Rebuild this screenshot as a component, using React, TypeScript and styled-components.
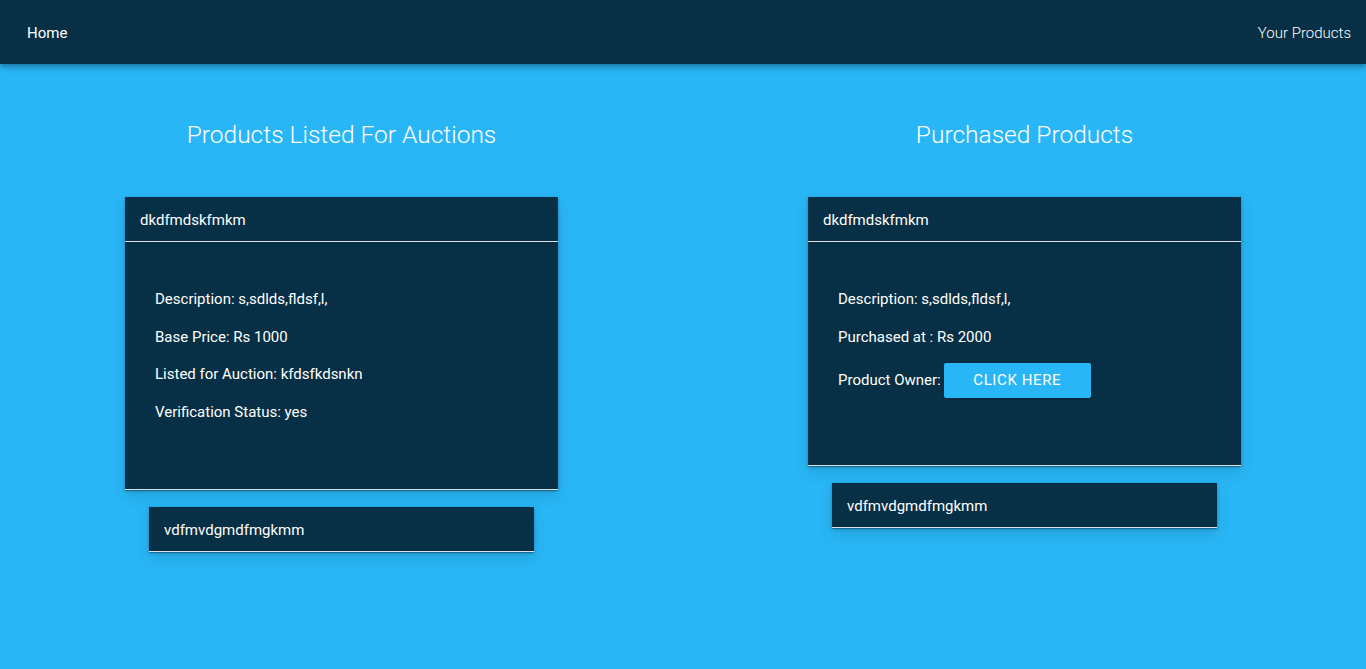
import React from "react";
import styled, { createGlobalStyle } from "styled-components";

const Global = createGlobalStyle`
  html, body { margin: 0; padding: 0; }
  body {
    background: #29b6f6;
    font-family: Roboto, "Liberation Sans", sans-serif;
    color: #fff;
    min-height: 669px;
  }
`;

const NavBar = styled.header`
  height: 64px;
  box-sizing: border-box;
  background: #072f45;
  display: flex;
  align-items: center;
  justify-content: space-between;
  padding: 2px 15px 0 27px;
  box-shadow: 0 2px 4px -1px rgba(0,0,0,0.2), 0 4px 5px 0 rgba(0,0,0,0.14), 0 1px 10px 0 rgba(0,0,0,0.12);
  position: relative;
  z-index: 2;
`;

const NavLink = styled.a<{ $light?: boolean }>`
  color: #fff;
  font-size: 15px;
  font-weight: ${(p) => (p.$light ? 300 : 400)};
  text-decoration: none;
`;

const Columns = styled.main`
  display: grid;
  grid-template-columns: 1fr 1fr;
`;

const Column = styled.section`
  display: flex;
  flex-direction: column;
  align-items: center;
  padding-top: 53px;
`;

const Title = styled.h2`
  margin: 0 0 44px;
  font-size: 24.5px;
  font-weight: 300;
  line-height: 36px;
  color: #fff;
`;

const Panel = styled.div<{ $collapsed?: boolean }>`
  width: ${(p) => (p.$collapsed ? 385 : 433)}px;
  background: #072f45;
  border-bottom: 1px solid #e0e0e0;
  box-shadow: 0 1px 3px 0 rgba(0,0,0,0.2), 0 1px 1px 0 rgba(0,0,0,0.14), 0 2px 1px -1px rgba(0,0,0,0.12),
    0 6px 14px rgba(0,0,0,0.12);
  margin-bottom: 17px;
`;

const PanelHeader = styled.div<{ $divider?: boolean }>`
  height: ${(p) => (p.$divider ? 45 : 44)}px;
  box-sizing: border-box;
  display: flex;
  align-items: center;
  padding: 2px 15px 0;
  font-size: 15px;
  border-bottom: ${(p) => (p.$divider ? "1px solid #e0e0e0" : "none")};
`;

const PanelBody = styled.div`
  padding: 39px 30px 58px;
`;

const Line = styled.p`
  margin: 0;
  font-size: 15px;
  line-height: 37.5px;
`;

const OwnerRow = styled.div`
  display: flex;
  align-items: center;
  font-size: 15px;
  height: 48px;
  margin-bottom: 3px;
`;

const Button = styled.button`
  margin-left: 3px;
  width: 147px;
  height: 35px;
  border: none;
  border-radius: 2px;
  background: #29b6f6;
  color: #fff;
  font-family: Roboto, "Liberation Sans", sans-serif;
  font-size: 15px;
  font-weight: 400;
  letter-spacing: 0.6px;
  text-transform: uppercase;
  box-shadow: 0 1px 3px rgba(0,0,0,0.25);
  cursor: pointer;
`;

export default function App() {
  return (
    <>
      <Global />
      <NavBar>
        <NavLink href="#">Home</NavLink>
        <NavLink href="#" $light>Your Products</NavLink>
      </NavBar>
      <Columns>
        <Column>
          <Title>Products Listed For Auctions</Title>
          <Panel>
            <PanelHeader $divider>dkdfmdskfmkm</PanelHeader>
            <PanelBody>
              <Line>Description: s,sdlds,fldsf,l,</Line>
              <Line>Base Price: Rs 1000</Line>
              <Line>Listed for Auction: kfdsfkdsnkn</Line>
              <Line>Verification Status: yes</Line>
            </PanelBody>
          </Panel>
          <Panel $collapsed>
            <PanelHeader>vdfmvdgmdfmgkmm</PanelHeader>
          </Panel>
        </Column>
        <Column>
          <Title>Purchased Products</Title>
          <Panel>
            <PanelHeader $divider>dkdfmdskfmkm</PanelHeader>
            <PanelBody>
              <Line>Description: s,sdlds,fldsf,l,</Line>
              <Line>Purchased at : Rs 2000</Line>
              <OwnerRow>
                Product Owner:
                <Button>Click Here</Button>
              </OwnerRow>
            </PanelBody>
          </Panel>
          <Panel $collapsed>
            <PanelHeader>vdfmvdgmdfmgkmm</PanelHeader>
          </Panel>
        </Column>
      </Columns>
    </>
  );
}
